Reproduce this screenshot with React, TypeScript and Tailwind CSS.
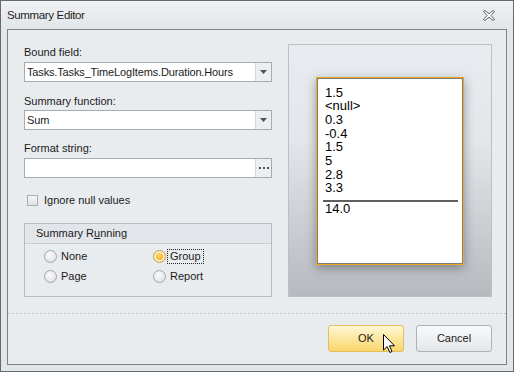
import React from "react";

const font = { fontFamily: '"Liberation Sans", Arial, sans-serif' };

function ComboArrow() {
  return (
    <svg width="7" height="4" viewBox="0 0 7 4">
      <path d="M0 0 H7 L3.5 4 Z" fill="#4d5258" />
    </svg>
  );
}

function Combo({ value, dots }: { value: string; dots?: boolean }) {
  return (
    <div className="flex h-[20px] w-[248px] border border-[#a7acb2] bg-white">
      <div className="flex flex-1 items-center pl-[2px] text-[11px] tracking-[-0.15px] text-[#1b1b1b]">
        {value}
      </div>
      <div className="flex w-[16px] items-center justify-center border-l border-[#d3d7db] bg-[#eceef1]">
        {dots ? (
          <div className="flex gap-[2px]">
            <div className="h-[2px] w-[2px] bg-[#4d5258]" />
            <div className="h-[2px] w-[2px] bg-[#4d5258]" />
            <div className="h-[2px] w-[2px] bg-[#4d5258]" />
          </div>
        ) : (
          <ComboArrow />
        )}
      </div>
    </div>
  );
}

function Radio({ checked }: { checked?: boolean }) {
  return (
    <div
      className={
        "flex h-[13px] w-[13px] items-center justify-center rounded-full border " +
        (checked
          ? "border-[#c99a3c] bg-[radial-gradient(circle,#fff8e0_0%,#f4e6c0_100%)]"
          : "border-[#a2a7ad] bg-[radial-gradient(circle_at_40%_35%,#fbfbfc_0%,#d8dbdf_100%)]")
      }
    >
      {checked && (
        <div className="h-[7px] w-[7px] rounded-full bg-[radial-gradient(circle_at_40%_35%,#ffd86a_0%,#f3a307_100%)]" />
      )}
    </div>
  );
}

function RadioItem({
  label,
  checked,
  focus,
  second,
}: {
  label: string;
  checked?: boolean;
  focus?: boolean;
  second?: boolean;
}) {
  return (
    <div className="flex h-[20px] items-center">
      <Radio checked={checked} />
      <span
        className={
          (second ? "ml-[1px] px-[2px] " : "ml-[4px] ") +
          "text-[11px] leading-[13px] text-[#1b1b1b] " +
          (second ? "border border-dotted " : "") +
          (focus ? "border-[#222]" : "border-transparent")
        }
      >
        {label}
      </span>
    </div>
  );
}

const values = ["1.5", "<null>", "0.3", "-0.4", "1.5", "5", "2.8", "3.3"];

export default function App() {
  return (
    <div
      className="relative flex h-[372px] w-[514px] flex-col border border-[#656a6f] bg-[#e3e6e9]"
      style={font}
    >
      {/* title bar */}
      <div className="flex h-[28px] items-center justify-between bg-[linear-gradient(to_bottom,#eff1f3,#e3e6e9)] pl-[6px] pr-[18px] pt-[2px]">
        <span className="text-[11.5px] tracking-[-0.35px] text-[#1e1e1e]">
          Summary Editor
        </span>
        <svg width="12" height="11" viewBox="0 0 12 11" className="mb-[1px]">
          <polygon
            points="0.5,1.5 2,0.5 6,3.8 10,0.5 11.5,1.5 8,5.5 11.5,9.5 10,10.5 6,7.2 2,10.5 0.5,9.5 4,5.5"
            fill="#ffffff"
            stroke="#5a5f64"
            strokeWidth="1"
            strokeLinejoin="round"
          />
        </svg>
      </div>

      {/* client */}
      <div className="mx-[6px] mb-[6px] flex flex-1 flex-col border border-[#7d8288] bg-[#e9ecef]">
        <div className="flex gap-[16px] pl-[16px] pr-[14px] pt-[14px]">
          {/* left column */}
          <div className="flex w-[248px] flex-col text-[11px] text-[#1b1b1b]">
            <div className="h-[16px] leading-[16px]">Bound field:</div>
            <div className="mt-[2px]">
              <Combo value="Tasks.Tasks_TimeLogItems.Duration.Hours" />
            </div>
            <div className="mt-[11px] h-[16px] leading-[16px]">Summary function:</div>
            <div className="mt-[1px]">
              <Combo value="Sum" />
            </div>
            <div className="mt-[10px] h-[16px] leading-[16px]">Format string:</div>
            <div className="mt-[2px]">
              <Combo value="" dots />
            </div>
            <div className="mt-[15px] flex h-[14px] items-center pl-[3px]">
              <div className="h-[11px] w-[11px] border border-[#a9aeb3] bg-[linear-gradient(to_bottom,#f5f6f7,#dfe2e5)]" />
              <span className="ml-[6px]">Ignore null values</span>
            </div>
            <div className="mt-[16px] h-[74px] border border-[#b6bbc0]">
              <div className="flex h-[20px] items-center border-b border-[#c8ccd1] bg-[#e2e5e9] pl-[11px]">
                Summary R<span className="underline">u</span>nning
              </div>
              <div className="grid grid-cols-[109px_1fr] pl-[19px] pt-[2px]">
                <RadioItem label="None" />
                <RadioItem label="Group" checked focus second />
                <RadioItem label="Page" />
                <RadioItem label="Report" second />
              </div>
            </div>
          </div>

          {/* preview */}
          <div className="flex h-[253px] w-[204px] items-center justify-center border border-[#bcc0c5] bg-[linear-gradient(to_bottom,#e8ebef_0%,#e3e6ea_38%,#b6babf_100%)]">
            <div className="h-[188px] w-[148px] border border-[#f2a81d] shadow-[0_3px_10px_rgba(0,0,0,0.35)]">
              <div className="h-full w-full border border-[#7a7e83] bg-white pt-[7px] text-[13px] leading-[13.7px] text-black">
                <div className="pl-[7px]">
                  {values.map((v, i) => (
                    <div key={i}>{v}</div>
                  ))}
                </div>
                <div className="ml-[5px] mr-[4px] mt-[5px] h-[2px] bg-[#5f5f5f]" />
                <div className="pl-[7px]">14.0</div>
              </div>
            </div>
          </div>
        </div>

        {/* separator */}
        <div className="mt-[16px] h-px bg-[repeating-linear-gradient(to_right,#c2c6ca_0px,#c2c6ca_2px,transparent_2px,transparent_4px)]" />

        {/* buttons */}
        <div className="mt-[11px] flex justify-end gap-[12px] pr-[14px]">
          <div className="flex h-[27px] w-[76px] items-center justify-center rounded-[3px] border border-[#e2c062] bg-[linear-gradient(to_bottom,#fef7d6_0%,#fce79f_50%,#f9d66c_100%)] text-[11px] text-[#1b1b1b]">
            OK
          </div>
          <div className="flex h-[27px] w-[76px] items-center justify-center rounded-[3px] border border-[#adb2b8] bg-[linear-gradient(to_bottom,#f9fafb_0%,#eef0f2_50%,#e4e7ea_100%)] text-[11px] text-[#1b1b1b]">
            Cancel
          </div>
        </div>
      </div>

      {/* mouse cursor */}
      <svg
        className="absolute left-[382px] top-[333px]"
        width="13"
        height="20"
        viewBox="0 0 13 20"
      >
        <path
          d="M0.5 0.5 V16 L4.2 12.5 L6.8 18.5 L9 17.5 L6.5 11.8 H11.5 Z"
          fill="#ffffff"
          stroke="#000000"
          strokeWidth="1"
          strokeLinejoin="miter"
        />
      </svg>
    </div>
  );
}
